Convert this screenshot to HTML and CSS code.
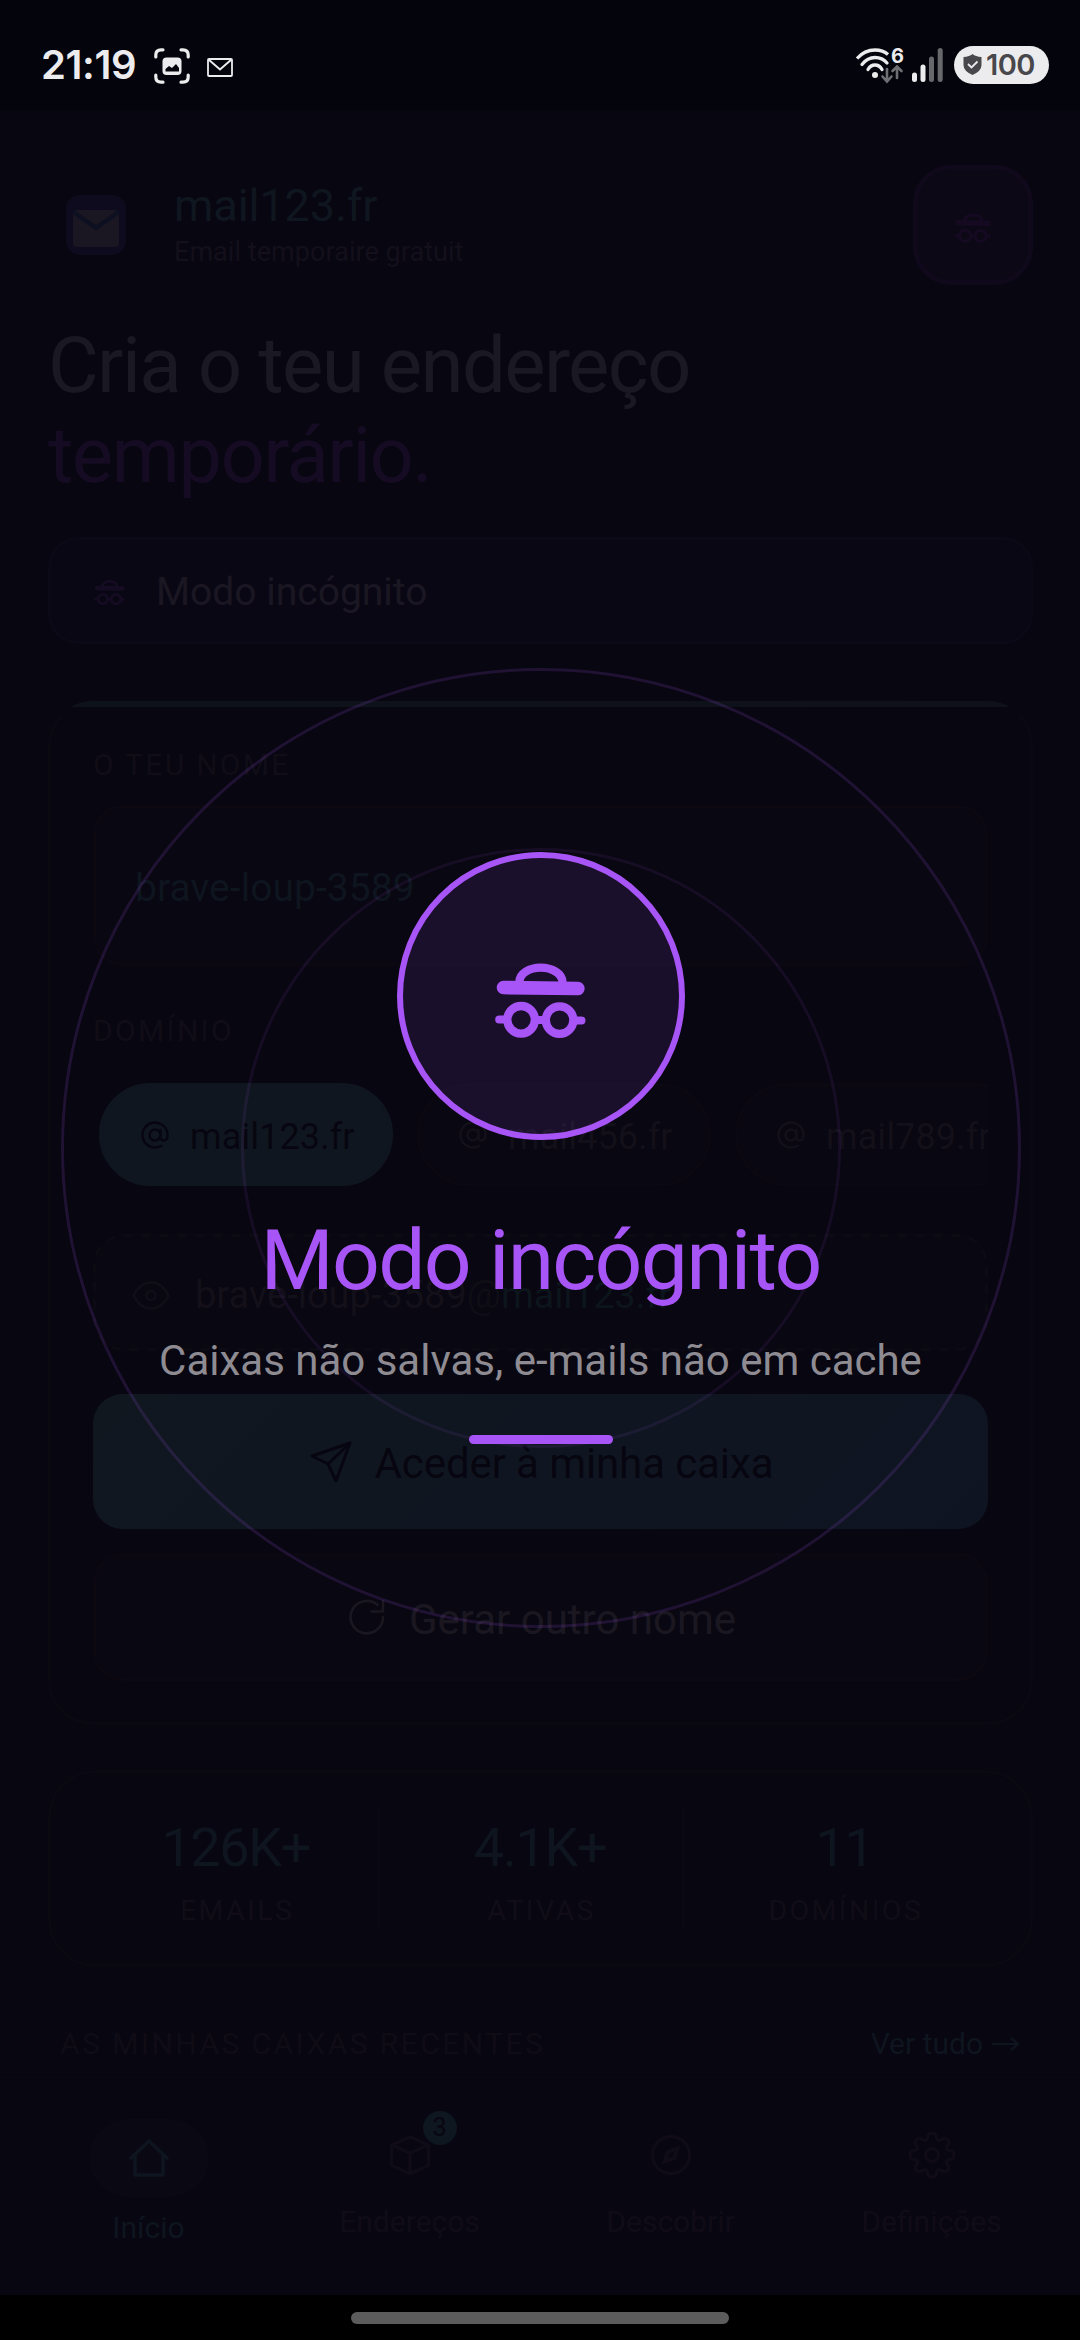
FILE: index.html
```html
<!DOCTYPE html>
<html lang="pt">
<head>
<meta charset="utf-8">
<title>mail123.fr</title>
<link rel="stylesheet" href="styles.css">
</head>
<body>
<svg class="defs" aria-hidden="true">
  <symbol id="incognito" viewBox="340 365 285 238">
    <g fill="none" stroke="currentColor" stroke-linecap="round">
      <path stroke-width="41" d="M371 445L595 448"/>
      <path stroke-width="25" stroke-linecap="butt" d="M419 436V428C419 402 450 385 483 385S549 402 549 430V438"/>
      <circle stroke-width="25" cx="424" cy="542" r="41.5"/>
      <circle stroke-width="25" cx="540" cy="543" r="41.5"/>
      <path stroke-width="24" d="M358 541H376M470 543H494M590 544H606"/>
    </g>
  </symbol>
  <symbol id="at" viewBox="0 0 28 28">
    <g fill="none" stroke="currentColor" stroke-width="2.400" stroke-linecap="round">
      <circle cx="14" cy="14" r="5.500"/>
      <path d="M19.500 9V16C19.500 21 26.500 21 26.500 14A12.500 12.500 0 1 0 20.500 24.700"/>
    </g>
  </symbol>
</svg>
<div class="screen">
  <header class="status">
    <span class="clock">21:19</span>
    <svg class="shot" viewBox="0 0 36 36" fill="none" stroke="#ececee" stroke-width="3.200" stroke-linecap="round">
      <path d="M1.800 9V7Q1.800 1.800 7 1.800H9M27 1.800H29Q34.200 1.800 34.200 7V9M34.200 27V29Q34.200 34.200 29 34.200H27M9 34.200H7Q1.800 34.200 1.800 29V27"/>
      <rect x="8.500" y="9.500" width="19" height="17.500" rx="4" fill="#ececee" stroke="none"/>
      <path d="M11.500 23.500V21L15 18L18 20L22 16L25 20V23.500Z" fill="#04040c" stroke="none"/>
    </svg>
    <svg class="envelope" viewBox="0 0 26 19" fill="none" stroke="#ececee" stroke-width="1.800"><rect x="1" y="1" width="24" height="17" rx="1"/><path stroke-width="2" d="M1.500 1.500L13 11.500L24.500 1.500"/></svg>
    <svg class="wifi" viewBox="0 0 50 36" fill="none" stroke="#ececee" stroke-width="3.300" stroke-linecap="round">
      <path stroke-linecap="butt" d="M2 11.500Q9.500 3 20 3Q28 3 33 7.500"/>
      <path d="M7 17.500Q12.500 10.500 20 10.500T32 16"/>
      <path d="M13 22.500Q15.500 18 20 18T27 22.500"/>
      <circle cx="20" cy="28" r="3" fill="#ececee" stroke="none"/>
      <path stroke="#6f6f73" stroke-width="2.600" d="M32 22V34M27.500 29.500L32 34.500L36.500 29.500M42 31V20M37.500 24L42 19.500L46.500 24"/>
      <text class="wifi-gen" x="36" y="15.500">6</text>
    </svg>
    <svg class="signal" viewBox="0 0 31 34" fill="#ececee"><rect y="24.500" width="5" height="9.500" rx="2.500"/><rect x="8.500" y="16.500" width="5" height="17.500" rx="2.500"/><rect x="17" y="8.500" width="5" height="25.500" rx="2.500" fill="#68676c"/><rect x="25.700" width="5" height="34" rx="2.500" fill="#68676c"/></svg>
    <div class="battery">
      <svg viewBox="0 0 18 21"><path fill="#48484c" d="M9 0Q12 2.500 18 3V11Q18 17 9 21Q0 17 0 11V3Q6 2.500 9 0Z"/><path fill="none" stroke="#ececee" stroke-width="1.800" d="M4.500 10L8 13.500L14 7.500"/></svg>
      <span>100</span>
    </div>
  </header>

  <main class="content">
    <div class="brand-row">
      <svg class="logo" viewBox="0 0 60 60"><rect width="60" height="60" rx="14" fill="#0e0b1e"/><rect x="7" y="15" width="46" height="37" rx="4" fill="#1a1722"/><path d="M9 18L30 33L51 18" fill="none" stroke="#0d1020" stroke-width="4.500" stroke-linecap="round"/></svg>
      <div class="brand">
        <div class="brand-name">mail123.fr</div>
        <div class="brand-sub">Email temporaire gratuit</div>
      </div>
      <div class="mode-button"><svg class="icon-mode"><use href="#incognito"/></svg></div>
    </div>

    <h1 class="headline">Cria o teu endereço<br><span>temporário.</span></h1>

    <div class="mode-banner"><svg><use href="#incognito"/></svg><span>Modo incógnito</span></div>

    <section class="card">
      <div class="label">O TEU NOME</div>
      <div class="input">brave-loup-3589</div>
      <div class="label label-domain">DOMÍNIO</div>
      <div class="chips">
        <div class="chip chip-on"><svg><use href="#at"/></svg><span>mail123.fr</span></div>
        <div class="chip"><svg><use href="#at"/></svg><span>mail456.fr</span></div>
        <div class="chip"><svg><use href="#at"/></svg><span>mail789.fr</span></div>
      </div>
      <div class="preview">
        <svg class="dashes"><rect x="1.500" y="1.500" width="892" height="114" rx="29"/></svg>
        <svg class="eye" viewBox="0 0 38 29" fill="none" stroke="currentColor" stroke-width="2.400"><path d="M1.500 14.500Q8 1.500 19 1.500T36.500 14.500Q30 27.500 19 27.500T1.500 14.500Z"/><circle cx="19" cy="14.500" r="4.600"/></svg>
        <span>brave-loup-3589<span class="dim">@</span><b>mail123.fr</b></span>
      </div>
      <div class="button primary">
        <svg class="send" viewBox="0 0 42 42" fill="none" stroke="currentColor" stroke-width="3" stroke-linejoin="round"><path d="M40 2L2 15L18 23L26 40ZM40 2L18 23"/></svg>
        <span>Aceder à minha caixa</span>
      </div>
      <div class="button secondary">
        <svg class="reload" viewBox="0 0 36 36" fill="none" stroke="currentColor" stroke-width="2.600" stroke-linecap="round" stroke-linejoin="round"><path d="M34 18A16.200 16.200 0 1 1 28.500 6M34 2V12.500H22.500"/></svg>
        <span>Gerar outro nome</span>
      </div>
    </section>

    <section class="stats">
      <div class="stat"><div class="value">126K+</div><div class="caption">EMAILS</div></div>
      <div class="stat"><div class="value">4.1K+</div><div class="caption">ATIVAS</div></div>
      <div class="stat"><div class="value">11</div><div class="caption">DOMÍNIOS</div></div>
    </section>

    <div class="recent">
      <span class="recent-title">AS MINHAS CAIXAS RECENTES</span>
      <span class="see-all">Ver tudo <svg viewBox="0 0 28 14" fill="none" stroke="currentColor" stroke-width="2.200"><path d="M0 7H26M19 1L26 7L19 13"/></svg></span>
    </div>
  </main>

  <nav class="tabs">
    <div class="tab active">
      <div class="tab-icon"><svg viewBox="0 0 40 38" fill="none" stroke="currentColor" stroke-width="3.600" stroke-linecap="round" stroke-linejoin="round"><path d="M2 19L20 2L38 19M6 16V36H34V16"/></svg></div>
      <span>Início</span>
    </div>
    <div class="tab">
      <div class="tab-icon"><svg viewBox="0 0 40 40" fill="none" stroke="currentColor" stroke-width="3.200" stroke-linejoin="round"><path d="M20 2L38.500 10V30.500L20 38.500L1.500 30.500V10ZM1.500 10L20 18L38.500 10M20 18V38.500"/></svg><i class="badge">3</i></div>
      <span>Endereços</span>
    </div>
    <div class="tab">
      <div class="tab-icon"><svg viewBox="0 0 40 40" fill="none" stroke="currentColor" stroke-width="3"><circle cx="20" cy="20" r="18.500"/><path stroke-width="4" d="M26.500 13.500L17 16.500L13.500 26.500L23.500 23Z"/></svg></div>
      <span>Descobrir</span>
    </div>
    <div class="tab">
      <div class="tab-icon"><svg class="gear" viewBox="0 0 48 48" fill="none" stroke="currentColor" stroke-width="3" stroke-linejoin="round"><circle cx="24" cy="24" r="6.500"/><path d="M19.500 6.500Q20 2 24 2T28.500 6.500Q29 11 33.500 8.500Q37 6 39.500 8.500T39.500 14.500Q37 19 41.500 19.500Q46 20 46 24T41.500 28.500Q37 29 39.500 33.500Q42 37 39.500 39.500T33.500 39.500Q29 37 28.500 41.500Q28 46 24 46T19.500 41.500Q19 37 14.500 39.500Q11 42 8.500 39.500T8.500 33.500Q11 29 6.500 28.500Q2 28 2 24T6.500 19.500Q11 19 8.500 14.500Q6 11 8.500 8.500T14.500 8.500Q19 11 19.500 6.500Z"/></svg></div>
      <span>Definições</span>
    </div>
  </nav>
  <footer class="gesture"><div></div></footer>

  <div class="overlay">
    <svg class="rings" viewBox="0 0 960 960" fill="none" stroke="#a855f7" stroke-width="3"><circle cx="480" cy="480" r="478.500" stroke-opacity=".15"/><circle cx="480" cy="480" r="298.500" stroke-opacity=".09"/></svg>
    <div class="overlay-icon"><svg><use href="#incognito"/></svg></div>
    <div class="overlay-title">Modo incógnito</div>
    <div class="overlay-text">Caixas não salvas, e-mails não em cache</div>
    <div class="overlay-bar"></div>
  </div>
</div>
</body>
</html>
```
FILE: styles.css
```css
* { box-sizing: border-box; }
body { margin: 0; background: #080611; font-family: Roboto, "Noto Sans", sans-serif; }
svg { display: block; flex: none; }
.defs { position: absolute; width: 0; height: 0; }
.screen { position: relative; width: 1080px; height: 2340px; overflow: hidden; display: flex; flex-direction: column; background: #080611; white-space: nowrap; }

/* status bar */
.status { height: 110px; flex: none; background: #04040c; display: flex; align-items: center; padding: 20px 31px 0 41px; color: #ececee; }
.clock { width: 96px; font: 600 40px/40px Inter, sans-serif; letter-spacing: -.4px; }
.shot { width: 36px; height: 36px; margin: 1px 0 0 17px; }
.envelope { width: 26px; height: 19px; margin: 4px auto 0 17px; }
.wifi { width: 50px; height: 36px; margin-right: 7px; overflow: visible; }
.wifi-gen { font: 700 20px Inter, sans-serif; fill: #ececee; stroke: none; }
.signal { width: 31px; height: 34px; margin-right: 11px; }
.battery { width: 95px; height: 38px; border-radius: 19px; background: #ececee; display: flex; align-items: center; padding-left: 9px; gap: 4px; color: #48484c; font: 600 29px/38px Inter, sans-serif; letter-spacing: -.6px; }
.battery svg { width: 19px; height: 21px; margin-top: -2px; }

/* header */
.content { flex: none; height: 1966px; padding: 55px 47px 0 48px; }
.brand-row { height: 120px; display: flex; align-items: center; padding-left: 18px; }
.logo { width: 60px; height: 60px; }
.brand { flex: 1; margin: -2px 0 0 48px; }
.brand-name { font-size: 45px; line-height: 56px; letter-spacing: -.1px; color: #0f161f; }
.brand-sub { font-size: 27px; line-height: 36px; letter-spacing: .05px; color: #130f1b; }
.mode-button { width: 120px; height: 120px; border: 5px solid #10091b; border-radius: 38px; background: #0c0815; color: #150a22; display: flex; align-items: center; justify-content: center; }
.icon-mode { width: 38px; height: 32px; margin-top: 6px; }
.headline { margin: 35px 0 37px; padding-top: 1px; height: 180px; font-weight: 400; font-size: 78px; line-height: 90px; letter-spacing: -1.65px; color: #1a1823; }
.headline span { color: #150b22; }
.mode-banner { height: 107px; border: 3px solid #0c0917; border-radius: 30px; background: #0a0714; display: flex; align-items: center; padding: 3px 0 0 42px; gap: 30px; font-size: 39px; color: #1a1722; }
.mode-banner svg { width: 33px; height: 27px; color: #150b22; }

/* form card */
.card { position: relative; margin-top: 57px; height: 1024px; border-radius: 45px; border: 3px solid #0a0811; padding: 43px 42px 0; overflow: hidden; background: linear-gradient(90deg, #0e121a, #0e1119) border-box 0 0 / 100% 6px no-repeat; border-top-color: transparent; }
.label { font-size: 30px; line-height: 36px; letter-spacing: 2.3px; color: #100d17; }
.input { margin-top: 22px; height: 161px; border: 3px solid #0b0812; border-radius: 30px; background: #090711; padding: 5px 0 0 39px; display: flex; align-items: center; font-size: 39px; letter-spacing: .05px; color: #0e151f; }
.label-domain { margin-top: 47px; }
.chips { margin-top: 34px; display: flex; gap: 24px; padding-left: 6px; overflow: hidden; }
.chip { flex: none; width: 294px; height: 103px; border: 3px solid #0b0812; border-radius: 52px; background: #090711; display: flex; align-items: center; padding-left: 39px; gap: 21px; font-size: 36px; letter-spacing: .1px; color: #13101a; }
.chip span { padding-top: 4px; }
.chip svg { width: 28px; height: 28px; }
.chip-on { background: #10161f; border-color: #10161f; color: #070610; }
.preview { position: relative; margin-top: 48px; height: 117px; border-radius: 30px; background: #090711; display: flex; align-items: center; gap: 25px; padding: 5px 0 0 39px; font-size: 38px; color: #13101a; }
.preview b { font-weight: 400; font-size: 37.500px; color: #0d151c; }
.preview .dim { color: #0f0d16; }
.dashes { position: absolute; left: 0; top: 0; width: 895px; height: 117px; fill: none; stroke: #0c0a13; stroke-width: 3px; stroke-dasharray: 9 9; }
.eye { width: 38px; height: 29px; color: #100e17; }
.button { border-radius: 30px; display: flex; align-items: center; justify-content: center; font-size: 42px; }
.primary { margin-top: 43px; height: 135px; gap: 23px; padding-left: 2px; letter-spacing: -.1px; background: linear-gradient(135deg, #10171f, #0f1422); color: #070610; }
.send { width: 42px; height: 42px; }
.secondary { margin-top: 24px; height: 128px; gap: 24px; padding-left: 4px; border: 3px solid #0b0812; background: #090711; color: #1a1721; }
.primary span { padding-top: 3px; }
.secondary span { padding-top: 5px; }
.reload { width: 36px; height: 36px; }

/* stats */
.stats { margin-top: 45px; height: 197px; border: 3px solid #0a0811; border-radius: 48px; padding: 35px 41px 0; display: grid; grid-template-columns: repeat(3, 1fr); gap: 16px; align-items: start; text-align: center; }
.stat { height: 121px; padding: 8px 0 0 2px; border-right: 3px solid #0a0812; }
.stat:last-child { border-color: transparent; }
.value { font-size: 54px; line-height: 64px; letter-spacing: -1.400px; color: #0e151f; }
.caption { margin-top: 13px; padding-left: 3px; font-size: 28.500px; line-height: 36px; letter-spacing: 2.400px; color: #100d17; }
.recent { margin-top: 59px; padding: 0 13px 0 12px; display: flex; justify-content: space-between; font-size: 30px; line-height: 36px; }
.recent-title { letter-spacing: 2.450px; color: #0f0c16; }
.see-all { display: flex; align-items: center; gap: 9px; color: #0e151f; }
.see-all svg { width: 28px; height: 14px; }

/* bottom bar */
.tabs { height: 219px; flex: none; border-top: 2px solid #090712; padding: 41px 18px 0; display: grid; grid-template-columns: repeat(4, 1fr); }
.tab { display: flex; flex-direction: column; align-items: center; gap: 13px; font-size: 30px; line-height: 36px; color: #100c17; }
.tab-icon { position: relative; width: 120px; height: 72px; border-radius: 39px; display: flex; align-items: center; justify-content: center; }
.tab-icon svg { width: 40px; height: 40px; }
.tab-icon .gear { width: 48px; height: 48px; }
.active { color: #0e151f; }
.active .tab-icon { height: 78px; background: #090813; }
.badge { position: absolute; left: 73px; top: -8px; width: 34px; height: 34px; border-radius: 17px; background: #0e161f; color: #080611; font: 400 25px/34px Roboto, sans-serif; text-align: center; }
.gesture { height: 45px; flex: none; background: #000; display: flex; justify-content: center; padding-top: 17px; }
.gesture div { width: 378px; height: 12px; border-radius: 6px; background: #5c5c5c; }

/* full-screen mode announcement */
.overlay { position: absolute; inset: 0; padding: 852px 0 0 1px; display: flex; flex-direction: column; align-items: center; color: #a855f7; }
.rings { position: absolute; left: 60.500px; top: 667.500px; width: 960px; height: 960px; }
.overlay-icon { position: relative; width: 288px; height: 288px; border: 6px solid #a855f7; border-radius: 50%; background: rgba(168, 85, 247, .115); display: flex; align-items: center; justify-content: center; }
.overlay-icon svg { width: 95px; height: 79px; margin-top: 9px; }
.overlay-title { position: relative; margin-top: 71px; font-size: 84px; line-height: 100px; letter-spacing: -1.75px; }
.overlay-text { position: relative; margin-top: 25px; font-size: 42px; line-height: 50px; color: #8e8c92; }
.overlay-bar { position: relative; margin-top: 49px; width: 144px; height: 9px; border-radius: 5px; background: #a855f7; }
```
